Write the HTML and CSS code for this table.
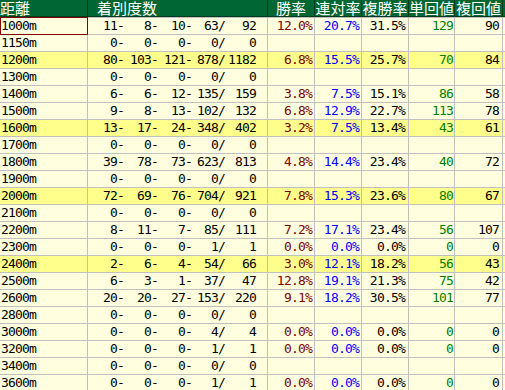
FILE: index.html
```html
<!DOCTYPE html>
<html lang="ja">
<head>
<meta charset="utf-8">
<title>距離別成績</title>
<link rel="stylesheet" href="styles.css">
</head>
<body>
<div class="sheet">
  <div class="row head">
    <div class="c dist">距離</div>
    <div class="c rec">着別度数</div>
    <div class="c ctr">勝率</div>
    <div class="c ctr">連対率</div>
    <div class="c ctr">複勝率</div>
    <div class="c ctr">単回値</div>
    <div class="c ctr">複回値</div>
    <div class="c ctr"></div>
  </div>

  <div class="row">
    <div class="c dist sel">1000m</div>
    <div class="c rec"><span>11-</span><span>8-</span><span>10-</span><span>63/</span><span>92</span></div>
    <div class="c win">12.0%</div><div class="c ren">20.7%</div><div class="c fuku">31.5%</div><div class="c tan">129</div><div class="c fk">90</div><div class="c"></div>
  </div>
  <div class="row">
    <div class="c dist">1150m</div>
    <div class="c rec"><span>0-</span><span>0-</span><span>0-</span><span>0/</span><span>0</span></div>
    <div class="c win"></div><div class="c ren"></div><div class="c fuku"></div><div class="c tan"></div><div class="c fk"></div><div class="c"></div>
  </div>
  <div class="row hl">
    <div class="c dist">1200m</div>
    <div class="c rec"><span>80-</span><span>103-</span><span>121-</span><span>878/</span><span>1182</span></div>
    <div class="c win">6.8%</div><div class="c ren">15.5%</div><div class="c fuku">25.7%</div><div class="c tan">70</div><div class="c fk">84</div><div class="c"></div>
  </div>
  <div class="row">
    <div class="c dist">1300m</div>
    <div class="c rec"><span>0-</span><span>0-</span><span>0-</span><span>0/</span><span>0</span></div>
    <div class="c win"></div><div class="c ren"></div><div class="c fuku"></div><div class="c tan"></div><div class="c fk"></div><div class="c"></div>
  </div>
  <div class="row">
    <div class="c dist">1400m</div>
    <div class="c rec"><span>6-</span><span>6-</span><span>12-</span><span>135/</span><span>159</span></div>
    <div class="c win">3.8%</div><div class="c ren">7.5%</div><div class="c fuku">15.1%</div><div class="c tan">86</div><div class="c fk">58</div><div class="c"></div>
  </div>
  <div class="row">
    <div class="c dist">1500m</div>
    <div class="c rec"><span>9-</span><span>8-</span><span>13-</span><span>102/</span><span>132</span></div>
    <div class="c win">6.8%</div><div class="c ren">12.9%</div><div class="c fuku">22.7%</div><div class="c tan">113</div><div class="c fk">78</div><div class="c"></div>
  </div>
  <div class="row hl">
    <div class="c dist">1600m</div>
    <div class="c rec"><span>13-</span><span>17-</span><span>24-</span><span>348/</span><span>402</span></div>
    <div class="c win">3.2%</div><div class="c ren">7.5%</div><div class="c fuku">13.4%</div><div class="c tan">43</div><div class="c fk">61</div><div class="c"></div>
  </div>
  <div class="row">
    <div class="c dist">1700m</div>
    <div class="c rec"><span>0-</span><span>0-</span><span>0-</span><span>0/</span><span>0</span></div>
    <div class="c win"></div><div class="c ren"></div><div class="c fuku"></div><div class="c tan"></div><div class="c fk"></div><div class="c"></div>
  </div>
  <div class="row">
    <div class="c dist">1800m</div>
    <div class="c rec"><span>39-</span><span>78-</span><span>73-</span><span>623/</span><span>813</span></div>
    <div class="c win">4.8%</div><div class="c ren">14.4%</div><div class="c fuku">23.4%</div><div class="c tan">40</div><div class="c fk">72</div><div class="c"></div>
  </div>
  <div class="row">
    <div class="c dist">1900m</div>
    <div class="c rec"><span>0-</span><span>0-</span><span>0-</span><span>0/</span><span>0</span></div>
    <div class="c win"></div><div class="c ren"></div><div class="c fuku"></div><div class="c tan"></div><div class="c fk"></div><div class="c"></div>
  </div>
  <div class="row hl">
    <div class="c dist">2000m</div>
    <div class="c rec"><span>72-</span><span>69-</span><span>76-</span><span>704/</span><span>921</span></div>
    <div class="c win">7.8%</div><div class="c ren">15.3%</div><div class="c fuku">23.6%</div><div class="c tan">80</div><div class="c fk">67</div><div class="c"></div>
  </div>
  <div class="row">
    <div class="c dist">2100m</div>
    <div class="c rec"><span>0-</span><span>0-</span><span>0-</span><span>0/</span><span>0</span></div>
    <div class="c win"></div><div class="c ren"></div><div class="c fuku"></div><div class="c tan"></div><div class="c fk"></div><div class="c"></div>
  </div>
  <div class="row">
    <div class="c dist">2200m</div>
    <div class="c rec"><span>8-</span><span>11-</span><span>7-</span><span>85/</span><span>111</span></div>
    <div class="c win">7.2%</div><div class="c ren">17.1%</div><div class="c fuku">23.4%</div><div class="c tan">56</div><div class="c fk">107</div><div class="c"></div>
  </div>
  <div class="row">
    <div class="c dist">2300m</div>
    <div class="c rec"><span>0-</span><span>0-</span><span>0-</span><span>1/</span><span>1</span></div>
    <div class="c win">0.0%</div><div class="c ren">0.0%</div><div class="c fuku">0.0%</div><div class="c tan">0</div><div class="c fk">0</div><div class="c"></div>
  </div>
  <div class="row hl">
    <div class="c dist">2400m</div>
    <div class="c rec"><span>2-</span><span>6-</span><span>4-</span><span>54/</span><span>66</span></div>
    <div class="c win">3.0%</div><div class="c ren">12.1%</div><div class="c fuku">18.2%</div><div class="c tan">56</div><div class="c fk">43</div><div class="c"></div>
  </div>
  <div class="row">
    <div class="c dist">2500m</div>
    <div class="c rec"><span>6-</span><span>3-</span><span>1-</span><span>37/</span><span>47</span></div>
    <div class="c win">12.8%</div><div class="c ren">19.1%</div><div class="c fuku">21.3%</div><div class="c tan">75</div><div class="c fk">42</div><div class="c"></div>
  </div>
  <div class="row">
    <div class="c dist">2600m</div>
    <div class="c rec"><span>20-</span><span>20-</span><span>27-</span><span>153/</span><span>220</span></div>
    <div class="c win">9.1%</div><div class="c ren">18.2%</div><div class="c fuku">30.5%</div><div class="c tan">101</div><div class="c fk">77</div><div class="c"></div>
  </div>
  <div class="row">
    <div class="c dist">2800m</div>
    <div class="c rec"><span>0-</span><span>0-</span><span>0-</span><span>0/</span><span>0</span></div>
    <div class="c win"></div><div class="c ren"></div><div class="c fuku"></div><div class="c tan"></div><div class="c fk"></div><div class="c"></div>
  </div>
  <div class="row">
    <div class="c dist">3000m</div>
    <div class="c rec"><span>0-</span><span>0-</span><span>0-</span><span>4/</span><span>4</span></div>
    <div class="c win">0.0%</div><div class="c ren">0.0%</div><div class="c fuku">0.0%</div><div class="c tan">0</div><div class="c fk">0</div><div class="c"></div>
  </div>
  <div class="row">
    <div class="c dist">3200m</div>
    <div class="c rec"><span>0-</span><span>0-</span><span>0-</span><span>1/</span><span>1</span></div>
    <div class="c win">0.0%</div><div class="c ren">0.0%</div><div class="c fuku">0.0%</div><div class="c tan">0</div><div class="c fk">0</div><div class="c"></div>
  </div>
  <div class="row">
    <div class="c dist">3400m</div>
    <div class="c rec"><span>0-</span><span>0-</span><span>0-</span><span>0/</span><span>0</span></div>
    <div class="c win"></div><div class="c ren"></div><div class="c fuku"></div><div class="c tan"></div><div class="c fk"></div><div class="c"></div>
  </div>
  <div class="row">
    <div class="c dist">3600m</div>
    <div class="c rec"><span>0-</span><span>0-</span><span>0-</span><span>1/</span><span>1</span></div>
    <div class="c win">0.0%</div><div class="c ren">0.0%</div><div class="c fuku">0.0%</div><div class="c tan">0</div><div class="c fk">0</div><div class="c"></div>
  </div>
</div>
</body>
</html>
```

FILE: styles.css
```css
html, body {
  margin: 0;
  padding: 0;
  overflow: hidden;
  background: #ffffe0;
}

.sheet {
  width: 505px;
  display: flex;
  flex-direction: column;
  gap: 1px;
  background: #c0c0c0;
  font-family: "DejaVu Sans Mono", "Liberation Mono", monospace;
  font-size: 13px;
  letter-spacing: -0.8px;
  color: #000;
}

.row {
  display: grid;
  grid-template-columns: 87px 179px 46px 46px 46px 45px 47px 1fr;
  column-gap: 1px;
  height: 16px;
  background: #c0c0c0;
}

.c {
  background: #ffffe0;
  line-height: 16px;
  height: 16px;
  padding: 0 2px 0 0;
  text-align: right;
  white-space: nowrap;
}

.row.hl .c {
  background: #ffff8c;
}

.c.dist {
  text-align: left;
  padding: 0 0 0 1px;
}

.c.sel {
  position: relative;
}

.c.sel::after {
  content: "";
  position: absolute;
  left: 0;
  top: -1px;
  right: -1px;
  bottom: -1px;
  border: 1px solid #800000;
}

.c.rec {
  display: grid;
  grid-template-columns: 36px 34px 34px 33px 31px;
  padding: 0;
}

.c.rec span {
  text-align: right;
}

.c.win { color: #800000; }
.c.ren { color: #0000ff; }
.c.tan { color: #008000; padding-right: 1px; }
.c.fuku { padding-right: 3px; }
.c.fk { padding-right: 3px; }

.row.head {
  height: 16px;
  padding-bottom: 1px;
  background: #003a1d;
}

.row.head .c {
  background: #006633;
  color: #ffffff;
  font-family: "Noto Sans CJK JP", sans-serif;
  font-size: 15px;
  letter-spacing: 0;
  line-height: 15px;
  text-align: center;
  padding: 0;
}

.row.head .c.dist {
  text-align: left;
  padding-left: 0;
}

.row.head .c.rec {
  display: block;
  text-align: left;
  padding-left: 9px;
}
```
